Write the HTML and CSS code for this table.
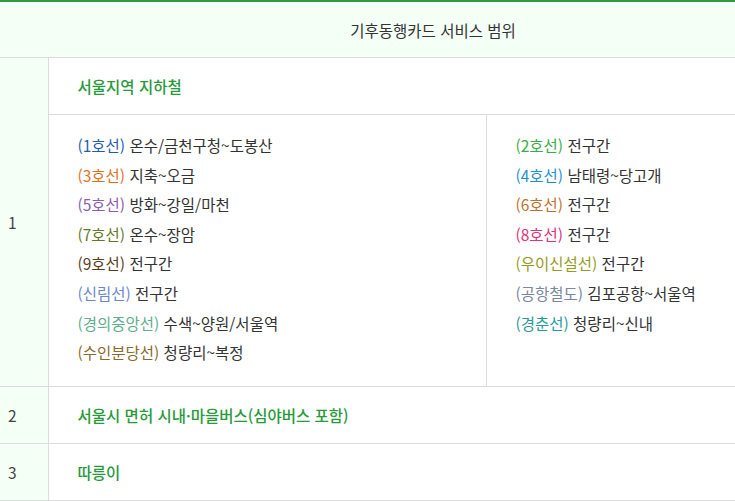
FILE: index.html
```html
<!DOCTYPE html>
<html lang="ko">
<head>
<meta charset="utf-8">
<title>기후동행카드 서비스 범위</title>
<link rel="stylesheet" href="styles.css">
</head>
<body>
<table class="scope">
  <colgroup>
    <col class="col-no">
    <col class="col-left">
    <col class="col-right">
  </colgroup>
  <thead>
    <tr><th colspan="3" class="head">기후동행카드 서비스 범위</th></tr>
  </thead>
  <tbody>
    <tr>
      <td rowspan="2" class="no">1</td>
      <td colspan="2" class="sub">서울지역 지하철</td>
    </tr>
    <tr>
      <td class="lines">
        <ul>
          <li><span class="l1">(1호선)</span> 온수/금천구청~도봉산</li>
          <li><span class="l3">(3호선)</span> 지축~오금</li>
          <li><span class="l5">(5호선)</span> 방화~강일/마천</li>
          <li><span class="l7">(7호선)</span> 온수~장암</li>
          <li><span class="l9">(9호선)</span> 전구간</li>
          <li><span class="lsl">(신림선)</span> 전구간</li>
          <li><span class="lgj">(경의중앙선)</span> 수색~양원/서울역</li>
          <li><span class="lsb">(수인분당선)</span> 청량리~복정</li>
        </ul>
      </td>
      <td class="lines right">
        <ul>
          <li><span class="l2">(2호선)</span> 전구간</li>
          <li><span class="l4">(4호선)</span> 남태령~당고개</li>
          <li><span class="l6">(6호선)</span> 전구간</li>
          <li><span class="l8">(8호선)</span> 전구간</li>
          <li><span class="lui">(우이신설선)</span> 전구간</li>
          <li><span class="lar">(공항철도)</span> 김포공항~서울역</li>
          <li><span class="lgc">(경춘선)</span> 청량리~신내</li>
        </ul>
      </td>
    </tr>
    <tr>
      <td class="no">2</td>
      <td colspan="2" class="sub">서울시 면허 시내·마을버스(심야버스 포함)</td>
    </tr>
    <tr>
      <td class="no">3</td>
      <td colspan="2" class="sub">따릉이</td>
    </tr>
  </tbody>
</table>
</body>
</html>
```

FILE: styles.css
```css
html, body {
  margin: 0;
  padding: 0;
  overflow: hidden;
  background: #fff;
}
body {
  font-family: "Noto Sans CJK KR", "Noto Sans", sans-serif;
  font-size: 15.5px;
  color: #333;
}
.scope {
  width: 866px;
  border-collapse: collapse;
  table-layout: fixed;
  border-top: 2px solid #2c9b42;
}
.col-no { width: 48px; }
.col-left { width: 438px; }
.col-right { width: 380px; }
.scope th,
.scope td {
  border-bottom: 1px solid #dcdcdc;
  vertical-align: middle;
  text-align: left;
}
.head {
  height: 55px;
  padding: 0;
  background: #f4fff6;
  font-weight: 400;
  font-size: 15.5px;
  text-align: center !important;
  color: #333;
  line-height: 22px;
}
.no {
  background: #f4fff6;
  border-right: 1px solid #dcdcdc;
  padding: 0 0 0 8px;
  color: #444;
}
.sub {
  height: 56px;
  padding: 0 29px;
  color: #279a3b;
  font-weight: 500;
  font-size: 15.5px;
  line-height: 22px;
}
.lines {
  padding: 16px 29px 18px;
  vertical-align: top !important;
}
.lines.right {
  border-left: 1px solid #dcdcdc;
}
.lines ul {
  list-style: none;
  margin: 0;
  padding: 0;
}
.lines li {
  line-height: 29.6px;
  white-space: nowrap;
}
.l1 { color: #1f5db4; }
.l2 { color: #3aab48; }
.l3 { color: #e0711c; }
.l4 { color: #1e8fd4; }
.l5 { color: #8a5cb0; }
.l6 { color: #c0712e; }
.l7 { color: #5f7a26; }
.l8 { color: #e0317a; }
.l9 { color: #5a3b1c; }
.lsl { color: #6b88cf; }
.lui { color: #989a1e; }
.lgj { color: #5fad8e; }
.lar { color: #7888a0; }
.lsb { color: #8a6a2c; }
.lgc { color: #279a9a; }
```
